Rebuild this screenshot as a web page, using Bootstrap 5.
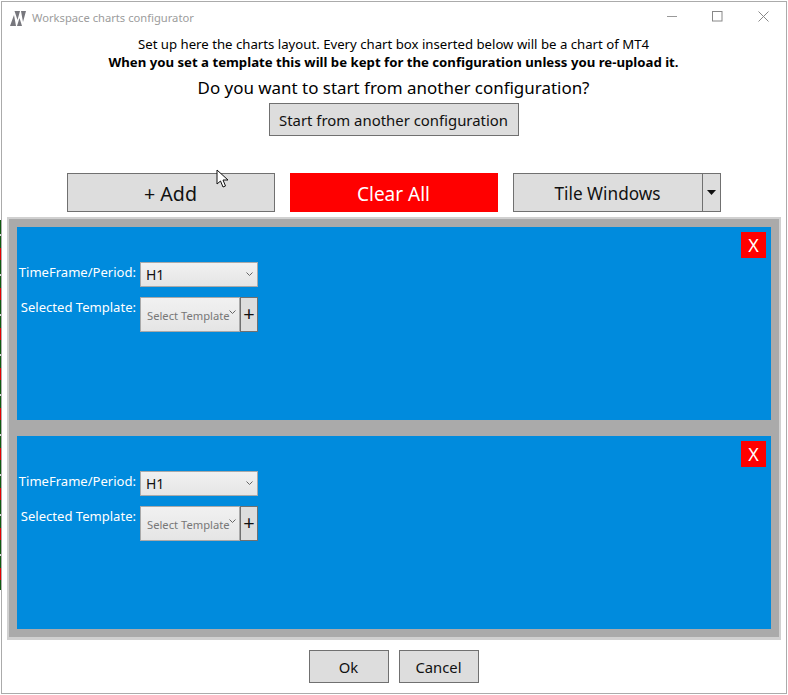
<!DOCTYPE html>
<html lang="en">
<head>
<meta charset="utf-8">
<title>Workspace charts configurator</title>
<link href="https://cdn.jsdelivr.net/npm/bootstrap@5.3.0/dist/css/bootstrap.min.css" rel="stylesheet">
<style>
html,body{height:100%;}
body{margin:0;background:#fff;font-family:"Noto Sans","Open Sans","Liberation Sans",sans-serif;overflow:hidden;color:#000;}
.app-win{position:relative;width:786px;height:693px;margin:1px 0 0 1px;padding-right:1px;border:1px solid #ababab;background:#fff;display:flex;flex-direction:column;}
.edge-left{position:absolute;left:-2px;top:218px;width:1px;height:370px;background:repeating-linear-gradient(#0f5a0f 0 14px,#d8d8d8 14px 16px,#0f5a0f 16px 28px,#e40000 28px 40px);}
.title-row{height:33px;padding-left:8px;}
.title-txt{font-size:11.2px;color:#9c9c9c;margin-left:5px;}
.win-ctl{position:absolute;top:9px;}
.ctl-min{left:665px;top:8px;}
.ctl-max{left:710px;}
.ctl-close{left:756px;}
.hd-line{font-size:13.2px;line-height:18px;}
.hd-q{font-size:16.95px;line-height:24px;margin-top:5px;}
.win-btn{background:#ddd;border:1px solid #707070;border-radius:0;color:#111;padding:1px 0 0;line-height:1;}
.win-btn:hover{background:#ddd;}
.btn-start{width:250px;height:33px;font-size:14.9px;margin-top:3px;}
.tool-row{margin-top:37px;gap:15px;}
.btn-wide{width:208px;height:39px;font-size:19px;padding-top:3px;}
.btn-add{font-size:19.6px;}
.btn-clear{background:#f00;border-color:#f00;color:#fff;}
.btn-clear:hover{background:#f00;color:#fff;}
.btn-tile{width:190px;height:39px;font-size:17.2px;padding-top:2px;}
.btn-caret{width:19px;height:39px;margin-left:-1px;padding:0;}
.chart-wrap{margin:5px 4px 0 5px;border:2px solid #d0d0d0;border-bottom-width:3px;background:#aaa;padding:8px;display:flex;flex-direction:column;gap:16px;height:423px;}
.chart-box{position:relative;background:#008bdd;height:193px;color:#fff;padding:35px 0 0 0;}
.btn-x{position:absolute;top:5px;right:5px;width:25px;height:26px;background:#f00;color:#fff;font-size:18px;line-height:26px;text-align:center;}
.lbl-txt{width:123px;font-size:13.05px;text-align:right;padding-right:4px;white-space:nowrap;line-height:20px;}
.form-gap{margin-top:10px;}
.sel-wrap{appearance:none;border:1px solid #a9a9a9;border-radius:0;background-color:#eee;background-image:linear-gradient(#f1f1f1,#e5e5e5);font-family:inherit;}
.sel-period{width:118px;height:25px;font-size:14px;padding:1px 5px;color:#111;}
.sel-tpl{width:100px;height:35px;font-size:11.2px;padding:4px 6px 0;color:#777;}
.sel-arrow{position:absolute;pointer-events:none;}
.arrow-period{right:5px;top:10px;}
.arrow-tpl{right:4px;top:13px;}
.btn-plus{width:18px;height:35px;background:#ddd;border:1px solid #707070;font-size:20px;line-height:31px;text-align:center;color:#111;}
.foot-row{margin-top:10px;gap:10px;}
.btn-foot{width:80px;height:33px;font-size:14.8px;}
.mouse-ptr{position:absolute;left:214px;top:167px;}
</style>
</head>
<body>
<div class="app-win">
  <div class="edge-left"></div>
  <div class="title-row d-flex align-items-center">
    <svg width="17" height="17" viewBox="0 0 17 17"><path fill="#77777d" d="M0 16 4 5l2 11zM4.500 1H10L7.500 10zM7 16l2.500-8 2.500 8zM11 1h5l-3 11z"/></svg>
    <span class="title-txt">Workspace charts configurator</span>
  </div>
  <svg class="win-ctl ctl-min" width="12" height="12" viewBox="0 0 12 12"><path stroke="#999" d="M0 6.500h10"/></svg>
  <svg class="win-ctl ctl-max" width="12" height="12" viewBox="0 0 12 12"><rect x=".5" y=".5" width="9.500" height="9.500" fill="none" stroke="#888"/></svg>
  <svg class="win-ctl ctl-close" width="12" height="12" viewBox="0 0 12 12"><path stroke="#888" d="M.5.5l10 10M10.500.5l-10 10"/></svg>

  <div class="text-center hd-line">Set up here the charts layout. Every chart box inserted below will be a chart of MT4</div>
  <div class="text-center hd-line fw-bold">When you set a template this will be kept for the configuration unless you re-upload it.</div>
  <div class="text-center hd-q">Do you want to start from another configuration?</div>
  <div class="d-flex justify-content-center">
    <button type="button" class="btn win-btn btn-start">Start from another configuration</button>
  </div>

  <div class="d-flex justify-content-center tool-row">
    <button type="button" class="btn win-btn btn-wide btn-add">+ Add</button>
    <button type="button" class="btn win-btn btn-wide btn-clear">Clear All</button>
    <div class="d-flex">
      <button type="button" class="btn win-btn btn-tile">Tile Windows</button>
      <button type="button" class="btn win-btn btn-caret d-flex align-items-center justify-content-center">
        <svg width="9" height="5" viewBox="0 0 9 5"><path d="M0 0h9L4.500 5z" fill="#111"/></svg>
      </button>
    </div>
  </div>

  <div class="chart-wrap">
    <div class="chart-box">
      <div class="btn-x">X</div>
      <div class="d-flex align-items-start">
        <div class="lbl-txt">TimeFrame/Period:</div>
        <div class="position-relative d-flex">
          <select class="sel-wrap sel-period"><option>H1</option></select>
          <svg class="sel-arrow arrow-period" width="7" height="5" viewBox="0 0 7 5"><path d="M.5.5l3 3 3-3" fill="none" stroke="#666"/></svg>
        </div>
      </div>
      <div class="d-flex form-gap align-items-start">
        <div class="lbl-txt">Selected Template:</div>
        <div class="position-relative d-flex">
          <select class="sel-wrap sel-tpl"><option>Select Template</option></select>
          <svg class="sel-arrow arrow-tpl" width="7" height="5" viewBox="0 0 7 5"><path d="M.5.5l3 3 3-3" fill="none" stroke="#666"/></svg>
        </div>
        <div class="btn-plus">+</div>
      </div>
    </div>
    <div class="chart-box">
      <div class="btn-x">X</div>
      <div class="d-flex align-items-start">
        <div class="lbl-txt">TimeFrame/Period:</div>
        <div class="position-relative d-flex">
          <select class="sel-wrap sel-period"><option>H1</option></select>
          <svg class="sel-arrow arrow-period" width="7" height="5" viewBox="0 0 7 5"><path d="M.5.5l3 3 3-3" fill="none" stroke="#666"/></svg>
        </div>
      </div>
      <div class="d-flex form-gap align-items-start">
        <div class="lbl-txt">Selected Template:</div>
        <div class="position-relative d-flex">
          <select class="sel-wrap sel-tpl"><option>Select Template</option></select>
          <svg class="sel-arrow arrow-tpl" width="7" height="5" viewBox="0 0 7 5"><path d="M.5.5l3 3 3-3" fill="none" stroke="#666"/></svg>
        </div>
        <div class="btn-plus">+</div>
      </div>
    </div>
  </div>

  <div class="d-flex justify-content-center foot-row">
    <button type="button" class="btn win-btn btn-foot">Ok</button>
    <button type="button" class="btn win-btn btn-foot">Cancel</button>
  </div>

  <svg class="mouse-ptr" width="14" height="20" viewBox="0 0 14 20"><path d="M1 1v14l3.500-3 2.500 6 2.500-1-2.500-6h5z" fill="#fff" stroke="#111" stroke-width="1"/></svg>
</div>
</body>
</html>
